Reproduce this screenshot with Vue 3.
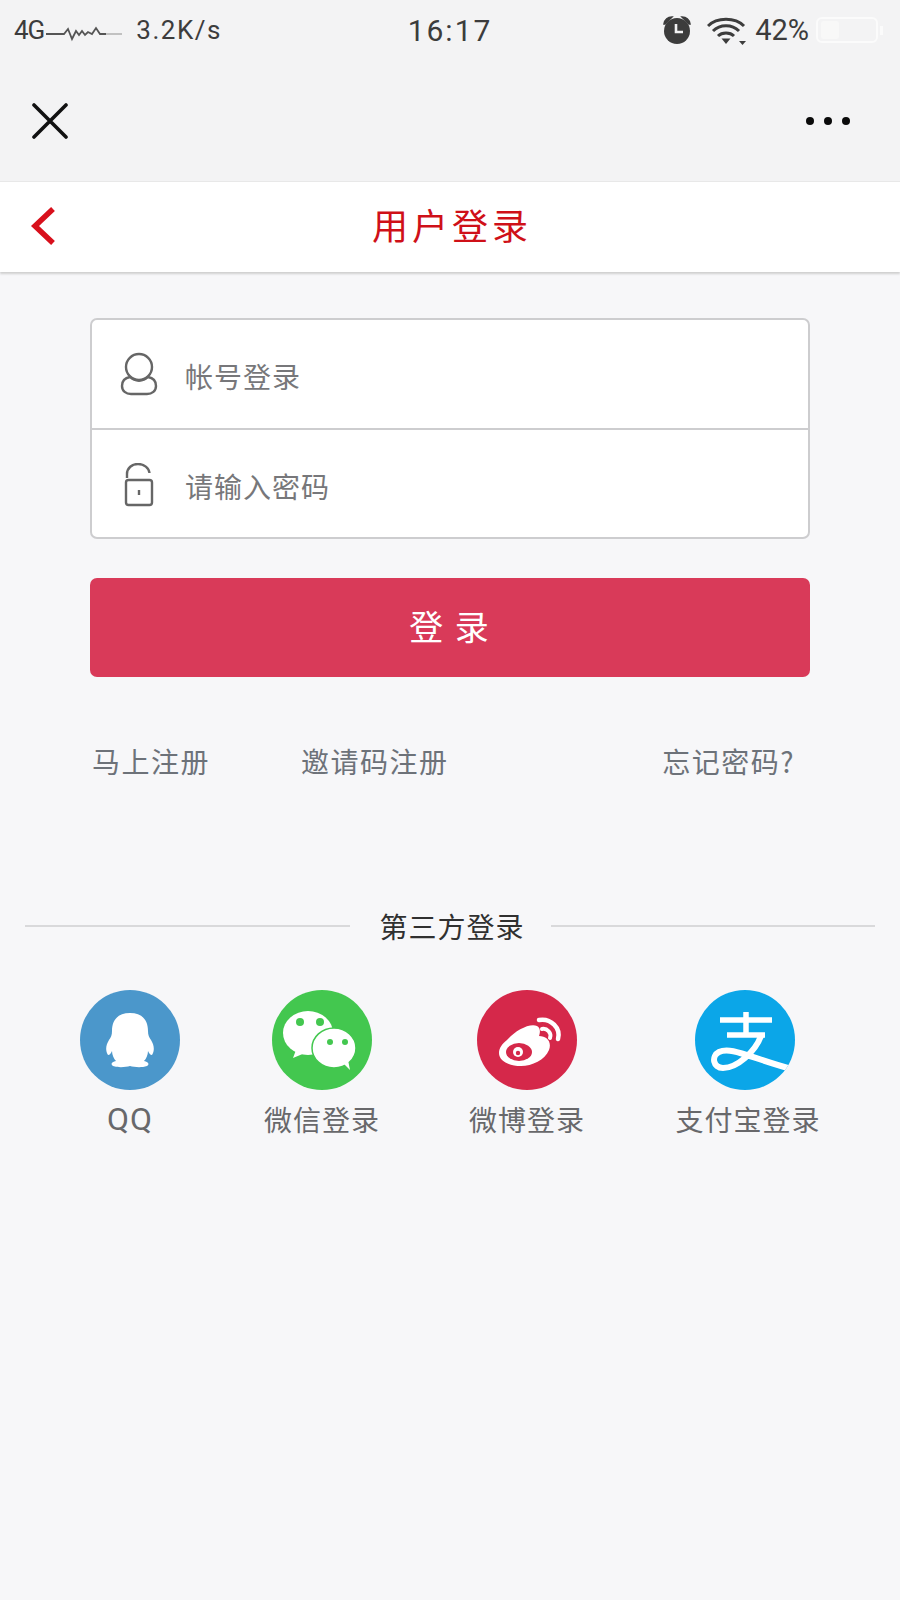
<script setup>
const socials = [
  { key: 'qq', label: 'QQ' },
  { key: 'wechat', label: '微信登录' },
  { key: 'weibo', label: '微博登录' },
  { key: 'alipay', label: '支付宝登录' },
]
</script>

<template>
  <div class="page">
    <div class="top">
      <div class="status">
        <div class="st-left">
          <span class="net">4G</span>
          <svg class="wave" width="76" height="20" viewBox="0 0 76 20" fill="none">
            <path d="M0 12H18L22 7L26 17L30 9L33 13L36 9L39 13L42 10L46 12L50 6L54 12H60" stroke="#555" stroke-width="1.8"/>
            <path d="M60 12H76" stroke="#bbb" stroke-width="1.8"/>
          </svg>
          <span class="speed">3.2K/s</span>
        </div>
        <div class="time">16:17</div>
        <div class="st-right">
          <svg class="alarm" width="30" height="30" viewBox="0 0 30 30">
            <path d="M2 9C3 4 6 2 10 2L3 9ZM28 9C27 4 24 2 20 2L27 9Z" fill="#3c3c3c" stroke="#3c3c3c" stroke-width="1.5"/>
            <circle cx="15" cy="16" r="13" fill="#3c3c3c"/>
            <path d="M14 9V17H21" fill="none" stroke="#f2f2f3" stroke-width="2.6"/>
          </svg>
          <svg class="wifi" width="40" height="28" viewBox="0 0 40 28" fill="none">
            <path d="M1 9C10 0 28 0 37 9" stroke="#3c3c3c" stroke-width="3"/>
            <path d="M6 14C13 7 25 7 32 14" stroke="#3c3c3c" stroke-width="3"/>
            <path d="M11 19C15 15 23 15 27 19" stroke="#3c3c3c" stroke-width="3"/>
            <path d="M14.5 21.5H23.5L19 27Z" fill="#3c3c3c"/>
            <path d="M32 24H39L35.5 28Z" fill="#3c3c3c"/>
          </svg>
          <span class="pct">42%</span>
          <div class="battery"><i class="level"></i></div>
          <i class="nib"></i>
        </div>
      </div>
      <div class="actions">
        <svg width="36" height="36" viewBox="0 0 36 36" fill="none">
          <path d="M2 2L34 34M34 2L2 34" stroke="#111" stroke-width="3.6" stroke-linecap="round"/>
        </svg>
        <div class="dots"><i></i><i></i><i></i></div>
      </div>
    </div>

    <header class="head">
      <svg class="back" width="26" height="40" viewBox="0 0 26 40" fill="none">
        <path d="M23 3L5 20L23 37" stroke="#d8101c" stroke-width="5.5"/>
      </svg>
      <h1>用户登录</h1>
    </header>

    <main class="main">
      <div class="form">
        <div class="row">
          <svg width="38" height="44" viewBox="0 0 38 44" fill="none" stroke="#666" stroke-width="2.4">
            <circle cx="19" cy="15" r="13"/>
            <path d="M10 25C4 26 2 30 2 34C2 39 6 42 11 42H27C32 42 36 39 36 34C36 30 34 26 28 25C23 30 15 30 10 25Z"/>
          </svg>
          <span>帐号登录</span>
        </div>
        <div class="row">
          <svg width="38" height="44" viewBox="0 0 38 44" fill="none" stroke="#666" stroke-width="2.4">
            <path d="M7 15V11C7 5 12 1 18 1C24 1 29 5 29.500 10"/>
            <rect x="6" y="17" width="26" height="25" rx="2.500"/>
            <path d="M19 27V32" stroke-width="2.400"/>
          </svg>
          <span>请输入密码</span>
        </div>
      </div>
      <button class="login">登 录</button>
      <div class="links">
        <span class="reg">马上注册</span>
        <span class="invite">邀请码注册</span>
        <span class="forgot">忘记密码?</span>
      </div>
    </main>

    <div class="divider"><i></i><span>第三方登录</span><i></i></div>

    <div class="socials">
      <div v-for="s in socials" :key="s.key" class="social" :class="s.key">
        <svg v-if="s.key === 'qq'" width="100" height="100" viewBox="0 0 100 100">
          <circle cx="50" cy="50" r="50" fill="#4b97cb"/>
          <path fill="#fff" d="M50 23C62 23 68 30 68 41C68 45 69 47 71 50C74 55 75 60 72 65C70 65 69 63 68 61C68 65 66 69 64 71C68 72 70 74 67 76C61 78 54 77 50 76C46 77 39 78 33 76C30 74 32 72 36 71C34 69 32 65 32 61C31 63 30 65 28 65C25 60 26 55 29 50C31 47 32 45 32 41C32 30 38 23 50 23Z"/>
        </svg>
        <svg v-else-if="s.key === 'wechat'" width="100" height="100" viewBox="0 0 100 100">
          <circle cx="50" cy="50" r="50" fill="#43c74f"/>
          <ellipse cx="36" cy="43" rx="25" ry="22" fill="#fff"/>
          <path d="M24 60L21 68L33 63Z" fill="#fff"/>
          <ellipse cx="62" cy="58" rx="22" ry="20" fill="#fff" stroke="#43c74f" stroke-width="1.500"/>
          <path d="M72 74L78 80L76 70Z" fill="#fff"/>
          <g fill="#43c74f">
            <circle cx="28" cy="32" r="4"/><circle cx="48" cy="32" r="4"/>
            <circle cx="58" cy="52" r="3"/><circle cx="73" cy="52" r="3"/>
          </g>
        </svg>
        <svg v-else-if="s.key === 'weibo'" width="100" height="100" viewBox="0 0 100 100" fill="none">
          <circle cx="50" cy="50" r="50" fill="#d5284a"/>
          <path fill="#fff" d="M30 50C38 41 52 33 60 36C64 38 63 43 62 46C70 46 75 52 72 60C68 70 55 76 44 76C32 76 22 71 22 63C22 58 25 54 30 50Z"/>
          <ellipse cx="42" cy="62" rx="13" ry="9" fill="#d5284a"/>
          <circle cx="41" cy="62" r="5" fill="#fff"/>
          <circle cx="41" cy="63" r="2.200" fill="#d5284a"/>
          <path d="M62 30C74 28 84 38 81 49" stroke="#fff" stroke-width="4.500" stroke-linecap="round"/>
          <path d="M65 39C70 38 75 43 73 48" stroke="#fff" stroke-width="4" stroke-linecap="round"/>
        </svg>
        <svg v-else width="100" height="100" viewBox="0 0 100 100" fill="none">
          <defs><clipPath id="ali"><circle cx="50" cy="50" r="50"/></clipPath></defs>
          <circle cx="50" cy="50" r="50" fill="#0ba6e8"/>
          <g clip-path="url(#ali)" stroke="#fff" stroke-width="5.500">
            <path d="M25 30H77M51 22V45M32 45H70"/>
            <path d="M66 46C60 62 42 78 28 78C18 78 16 66 24 62C36 56 55 68 100 80" stroke-width="6"/>
          </g>
        </svg>
        <span>{{ s.label }}</span>
      </div>
    </div>
  </div>
</template>

<style>
html, body { margin: 0; background: #f7f7f9; }
</style>

<style scoped>
.page {
  width: 900px;
  height: 1600px;
  overflow: hidden;
  background: #f7f7f9;
  font-family: "Noto Sans CJK SC", "Liberation Sans", sans-serif;
}
i { display: block; }
.top { height: 181px; background: #f3f3f4; box-sizing: border-box; padding-top: 12px; }
.status {
  display: grid;
  grid-template-columns: 1fr auto 1fr;
  align-items: center;
  height: 36px;
  color: #3c3c3c;
  font-family: Roboto, sans-serif;
}
.st-left { display: flex; align-items: center; padding-left: 14px; }
.net { font-size: 26px; letter-spacing: -1px; }
.wave { margin: 3px 0 0 2px; }
.speed { font-size: 26px; letter-spacing: 1.500px; margin-left: 14px; }
.time { font-size: 30px; letter-spacing: 2px; }
.st-right { display: flex; align-items: center; justify-content: flex-end; padding-right: 17px; }
.alarm { margin-right: 15px; }
.wifi { margin-right: 8px; margin-top: 1px; }
.pct { font-size: 29px; }
.battery {
  width: 52px;
  height: 18px;
  margin-left: 7px;
  border: 2px solid #fbfbfb;
  border-radius: 6px;
  padding: 2px 3px;
}
.level { width: 18px; height: 100%; background: #fbfbfb; border-radius: 2px; opacity: .55; }
.nib { width: 3px; height: 9px; background: #fbfbfb; margin-left: 2px; }
.actions {
  display: flex;
  align-items: center;
  justify-content: space-between;
  padding: 55px 50px 0 32px;
}
.dots { display: flex; gap: 10px; }
.dots i { width: 8px; height: 8px; border-radius: 50%; background: #0a0a0a; }
.head {
  position: relative;
  height: 91px;
  background: #fff;
  border-top: 1px solid #e8e8e8;
  box-sizing: border-box;
  display: flex;
  align-items: center;
  justify-content: center;
  box-shadow: 0 2px 2px #cfcfcf;
}
.back { position: absolute; left: 30px; top: 24px; }
.head h1 { margin: -6px 0 0; padding-left: 4px; font-size: 36px; font-weight: 400; letter-spacing: 4px; color: #cf1018; }
.main { padding: 46px 90px 0; }
.form {
  background: #fff;
  border: 2px solid #cdcdcf;
  border-radius: 7px;
  height: 221px;
  box-sizing: border-box;
}
.row {
  height: 107.500px;
  display: flex;
  align-items: center;
  box-sizing: border-box;
  padding-left: 28px;
  gap: 27px;
  font-size: 28px;
  letter-spacing: 1px;
  color: #77777a;
}
.row span { margin-top: 4px; }
.row + .row { border-top: 2px solid #cdcdcf; height: 110px; }
.row + .row svg { margin-top: 2px; }
.login {
  display: block;
  width: 100%;
  height: 99px;
  margin-top: 39px;
  padding-bottom: 6px;
  border: 0;
  border-radius: 7px;
  background: #d93a59;
  color: #fff;
  font: 400 34px "Noto Sans CJK SC", sans-serif;
  letter-spacing: 2px;
}
.links {
  display: flex;
  margin-top: 64px;
  font-size: 28px;
  letter-spacing: 1.500px;
  color: #6d7279;
  line-height: 40px;
}
.reg { margin-left: 2px; }
.invite { margin-left: 91px; }
.forgot { margin-left: auto; margin-right: 15px; }
.divider {
  display: flex;
  align-items: center;
  margin: 125px 25px 0;
  height: 40px;
  font-size: 28px;
  color: #303030;
}
.divider i { flex: 1; height: 2px; background: #d9d9db; }
.divider span { margin: 0 26px 0 30px; letter-spacing: 1px; }
.socials { display: flex; margin-top: 44px; padding-left: 60px; }
.social {
  width: 140px;
  display: flex;
  flex-direction: column;
  align-items: center;
  font-size: 28px;
  letter-spacing: 1px;
  color: #68686b;
  line-height: 40px;
  white-space: nowrap;
}
.social svg { margin-bottom: 9px; }
.wechat { margin-left: 52px; }
.weibo { margin-left: 65px; }
.alipay { margin-left: 78px; }
.alipay span { padding-left: 6px; }
.qq span { font-family: Roboto, sans-serif; font-size: 32px; letter-spacing: 1px; }
</style>
